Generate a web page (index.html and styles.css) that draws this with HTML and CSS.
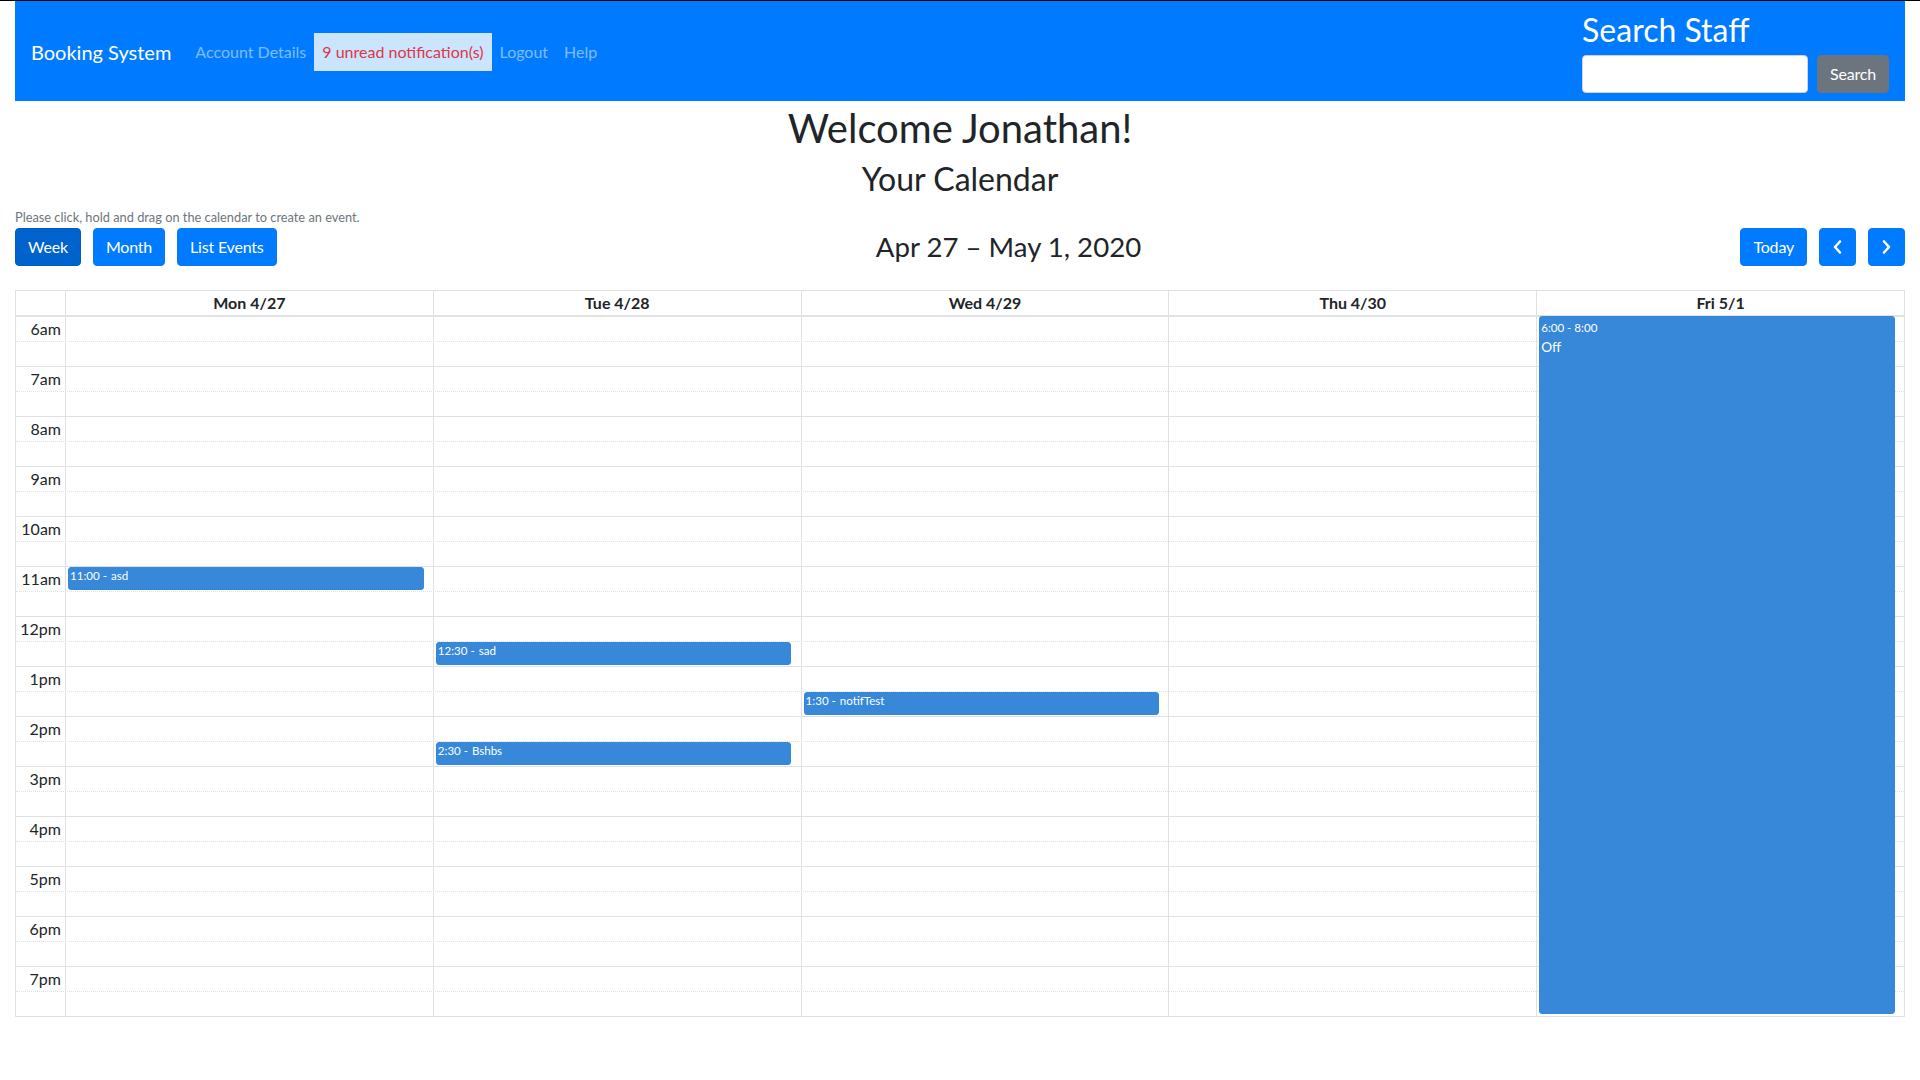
FILE: index.html
```html
<!DOCTYPE html>
<html lang="en">
<head>
<meta charset="utf-8">
<title>Booking System</title>
<link rel="stylesheet" href="styles.css">
</head>
<body>
<div class="page">
  <nav class="navbar">
    <div class="nav-left">
      <a class="brand">Booking System</a>
      <ul class="nav-links">
        <li><a class="nav-link">Account Details</a></li>
        <li><a class="nav-link notif">9 unread notification(s)</a></li>
        <li><a class="nav-link">Logout</a></li>
        <li><a class="nav-link">Help</a></li>
      </ul>
    </div>
    <form class="search">
      <h2 class="search-title">Search Staff</h2>
      <div class="search-row">
        <input class="search-input" type="text" aria-label="Search">
        <button class="btn btn-secondary" type="button">Search</button>
      </div>
    </form>
  </nav>

  <h1 class="welcome">Welcome Jonathan!</h1>
  <h2 class="subtitle">Your Calendar</h2>
  <p class="hint">Please click, hold and drag on the calendar to create an event.</p>

  <div class="calendar">
    <div class="toolbar">
      <div class="tb-group">
        <button class="btn btn-primary active" type="button">Week</button>
        <button class="btn btn-primary" type="button">Month</button>
        <button class="btn btn-primary" type="button">List Events</button>
      </div>
      <h2 class="tb-title">Apr 27 – May 1, 2020</h2>
      <div class="tb-group">
        <button class="btn btn-primary" type="button">Today</button>
        <button class="btn btn-primary btn-icon" type="button" aria-label="prev">
          <svg width="11" height="24" viewBox="0 0 11 24"><path d="M8 6.5 L3 12 L8 17.5" fill="none" stroke="#fff" stroke-width="2.6" stroke-linecap="round" stroke-linejoin="round"/></svg>
        </button>
        <button class="btn btn-primary btn-icon" type="button" aria-label="next">
          <svg width="11" height="24" viewBox="0 0 11 24"><path d="M3 6.5 L8 12 L3 17.5" fill="none" stroke="#fff" stroke-width="2.6" stroke-linecap="round" stroke-linejoin="round"/></svg>
        </button>
      </div>
    </div>

    <div class="grid">
      <div class="head">
        <div class="head-cell head-axis"></div>
        <div class="head-cell">Mon 4/27</div>
        <div class="head-cell">Tue 4/28</div>
        <div class="head-cell">Wed 4/29</div>
        <div class="head-cell">Thu 4/30</div>
        <div class="head-cell">Fri 5/1</div>
      </div>
      <div class="body">
        <div class="slats">
          <div class="slat"><div class="slat-label">6am</div></div>
          <div class="slat minor"></div>
          <div class="slat"><div class="slat-label">7am</div></div>
          <div class="slat minor"></div>
          <div class="slat"><div class="slat-label">8am</div></div>
          <div class="slat minor"></div>
          <div class="slat"><div class="slat-label">9am</div></div>
          <div class="slat minor"></div>
          <div class="slat"><div class="slat-label">10am</div></div>
          <div class="slat minor"></div>
          <div class="slat"><div class="slat-label">11am</div></div>
          <div class="slat minor"></div>
          <div class="slat"><div class="slat-label">12pm</div></div>
          <div class="slat minor"></div>
          <div class="slat"><div class="slat-label">1pm</div></div>
          <div class="slat minor"></div>
          <div class="slat"><div class="slat-label">2pm</div></div>
          <div class="slat minor"></div>
          <div class="slat"><div class="slat-label">3pm</div></div>
          <div class="slat minor"></div>
          <div class="slat"><div class="slat-label">4pm</div></div>
          <div class="slat minor"></div>
          <div class="slat"><div class="slat-label">5pm</div></div>
          <div class="slat minor"></div>
          <div class="slat"><div class="slat-label">6pm</div></div>
          <div class="slat minor"></div>
          <div class="slat"><div class="slat-label">7pm</div></div>
          <div class="slat minor"></div>
        </div>
        <div class="cols">
          <div class="axis-col"></div>
          <div class="col">
            <div class="events">
              <div class="event short" style="top:251px;height:23px"><div class="content"><span class="time">11:00&nbsp;-&nbsp;</span><span class="title">asd</span></div></div>
            </div>
          </div>
          <div class="col">
            <div class="events">
              <div class="event short" style="top:326px;height:23px"><div class="content"><span class="time">12:30&nbsp;-&nbsp;</span><span class="title">sad</span></div></div>
              <div class="event short" style="top:426px;height:23px"><div class="content"><span class="time">2:30&nbsp;-&nbsp;</span><span class="title">Bshbs</span></div></div>
            </div>
          </div>
          <div class="col">
            <div class="events">
              <div class="event short" style="top:376px;height:23px"><div class="content"><span class="time">1:30&nbsp;-&nbsp;</span><span class="title">notifTest</span></div></div>
            </div>
          </div>
          <div class="col">
            <div class="events"></div>
          </div>
          <div class="col">
            <div class="events">
              <div class="event long" style="top:0px;height:698px"><div class="content"><div class="time">6:00 - 8:00</div><div class="title">Off</div></div></div>
            </div>
          </div>
        </div>
      </div>
    </div>
  </div>
</div>
</body>
</html>
```

FILE: styles.css
```css
* { box-sizing: border-box; }

body {
  margin: 0;
  border-top: 1px solid #000;
  font-family: Lato, "Liberation Sans", sans-serif;
  font-size: 16px;
  line-height: 1.5;
  color: #212529;
  background: #fff;
}

.page {
  padding: 0 15px;
}

/* ---------- navbar ---------- */
.navbar {
  display: flex;
  justify-content: space-between;
  align-items: center;
  background: #007bff;
  padding: 8px 16px;
}

.nav-left {
  display: flex;
  align-items: center;
  padding-top: 2px;
}

.brand {
  font-size: 20px;
  line-height: 1.5;
  color: #fff;
  padding: 5px 0;
  margin-right: 16px;
}

.nav-links {
  display: flex;
  list-style: none;
  margin: 0;
  padding: 0;
}

.nav-link {
  display: block;
  padding: 7px 8px;
  color: rgba(255, 255, 255, 0.5);
  font-size: 16px;
  line-height: 1.5;
}

.nav-link.notif {
  background: #cce5ff;
  color: #dc3545;
}

.search {
  display: flex;
  flex-direction: column;
  margin: 0;
}

.search-title {
  margin: 0 0 6px;
  padding-top: 2px;
  font-size: 32px;
  font-weight: 400;
  line-height: 1.2;
  color: #fff;
}

.search-row {
  display: flex;
  gap: 9px;
}

.search-input {
  width: 226px;
  height: 38px;
  border: 1px solid #ced4da;
  border-radius: 4px;
  padding: 6px 12px;
  font: inherit;
  background: #fff;
}

/* ---------- buttons ---------- */
.btn {
  font-family: inherit;
  font-size: 16px;
  line-height: 1.5;
  padding: 6px 12px;
  border: 1px solid transparent;
  border-radius: 4px;
  color: #fff;
  cursor: pointer;
  letter-spacing: -0.2px;
}

.btn-primary {
  background: #007bff;
  border-color: #007bff;
}

.btn-primary.active {
  background: #0062cc;
  border-color: #005cbf;
}

.btn-secondary {
  background: #6c757d;
  border-color: #6c757d;
}

.btn-icon {
  display: flex;
  align-items: center;
  padding: 6px 12px;
}

.btn-icon svg {
  display: block;
}

/* ---------- headings ---------- */
.welcome {
  margin: 3px 0 8px;
  text-align: center;
  font-size: 40px;
  font-weight: 400;
  line-height: 1.2;
}

.subtitle {
  margin: 0 0 9px;
  text-align: center;
  font-size: 32px;
  font-weight: 400;
  line-height: 1.2;
}

.hint {
  margin: 0;
  font-size: 12.8px;
  line-height: 1.5;
  color: #6c757d;
}

/* ---------- calendar toolbar ---------- */
.toolbar {
  display: flex;
  justify-content: space-between;
  align-items: center;
  margin: 1px 0 24px;
}

.tb-group {
  display: flex;
  gap: 12px;
}

.tb-title {
  margin: 0;
  font-size: 27.6px;
  font-weight: 400;
  line-height: 1.2;
}

/* ---------- calendar grid ---------- */
.grid {
  border: 1px solid #dee2e6;
}

.head {
  display: grid;
  grid-template-columns: 49px repeat(5, 1fr);
  border-bottom: 1px solid #dee2e6;
}

.head-cell {
  border-left: 1px solid #dee2e6;
  text-align: center;
  font-weight: 700;
  font-size: 16px;
  line-height: 24px;
}

.head-axis {
  border-left: 0;
}

.body {
  display: grid;
}

.slats,
.cols {
  grid-area: 1 / 1;
}

.slat {
  height: 25px;
  border-top: 1px solid #dee2e6;
  display: grid;
  grid-template-columns: 49px 1fr;
}

.slat.minor {
  border-top-style: dotted;
}

.slat-label {
  text-align: right;
  padding-right: 4px;
  font-size: 16px;
  line-height: 24px;
  white-space: nowrap;
}

.cols {
  display: grid;
  grid-template-columns: 49px repeat(5, 1fr);
}

.col {
  border-left: 1px solid #dee2e6;
}

.events {
  position: relative;
  height: 100%;
  margin: 0 2.5% 0 2px;
}

.event {
  position: absolute;
  left: 0;
  right: 0;
  background: #3788d8;
  border: 1px solid #3788d8;
  border-radius: 3px;
  color: #fff;
  font-size: 13.6px;
  line-height: 1.4;
  overflow: hidden;
}

.event .time {
  font-size: 11.56px;
  padding: 0 1px;
  white-space: nowrap;
}

.event.long .time {
  line-height: 19px;
  padding-top: 1px;
}

.event.long .title {
  line-height: 20px;
}

.event .title {
  padding: 0 1px;
}

.event.short .content {
  white-space: nowrap;
}

.event.short .time,
.event.short .title {
  display: inline-block;
  vertical-align: top;
  font-size: 11.56px;
}

.event.short .title {
  padding: 0;
}
```
